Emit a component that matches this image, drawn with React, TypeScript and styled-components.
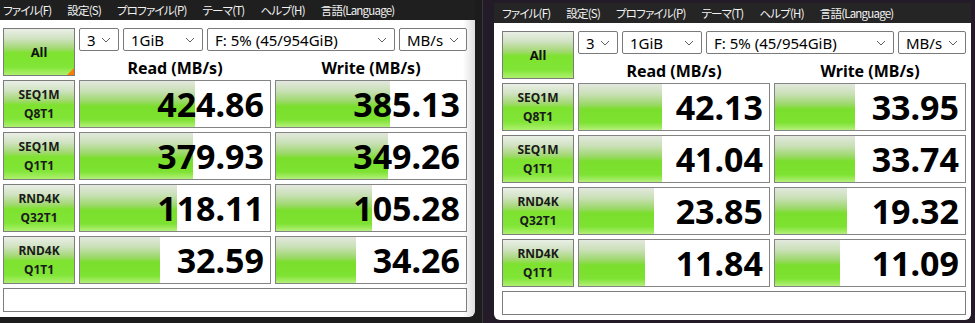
import React from "react";
import styled, { createGlobalStyle } from "styled-components";

const GlobalStyle = createGlobalStyle`
  html, body {
    margin: 0;
    padding: 0;
    background: #291d2d;
    overflow: hidden;
  }
`;

const green = `linear-gradient(
  to bottom,
  #eaefe6 0%,
  #d2e3c4 20%,
  #a3d873 42%,
  #7ee22f 52%,
  #80e536 82%,
  #aef06e 100%
)`;

const Screen = styled.div`
  display: flex;
  width: 975px;
  height: 323px;
  overflow: hidden;
`;

const LeftPane = styled.div`
  flex: none;
  width: 482px;
  height: 323px;
  background: #1c1c1c;
  border-right: 1px solid #383838;
  overflow: hidden;
`;

const RightPane = styled.div`
  flex: 1;
  height: 323px;
  box-sizing: border-box;
  padding: 3px 0 0 11px;
  background: #241b28;
  overflow: hidden;
`;

const Window = styled.div<{ $left?: boolean }>`
  width: ${(p) => (p.$left ? 480 : 477)}px;
  margin-left: ${(p) => (p.$left ? -5 : 0)}px;
  display: flex;
  flex-direction: column;
  border-radius: 0 0 6px 6px;
  overflow: hidden;
`;

const MenuBar = styled.div<{ $dim?: boolean }>`
  height: 20px;
  display: flex;
  align-items: center;
  gap: 16px;
  padding-left: 8px;
  background: ${(p) => (p.$dim ? "#252525" : "#1f1f1f")};
  color: #f2f2f2;
  font-family: "Noto Sans CJK JP", "Noto Sans", sans-serif;
  font-feature-settings: "palt";
  font-size: 11.5px;
  letter-spacing: -0.8px;
  white-space: nowrap;
`;

const Client = styled.div<{ $shade?: boolean }>`
  background: ${(p) =>
    p.$shade
      ? "linear-gradient(to right, #fff calc(100% - 12px), #dedede)"
      : "#fff"};
  padding: 8px 0 5px 8px;
`;

const Panel = styled.div`
  display: grid;
  grid-template-columns: 72px 192px 192px;
  grid-template-rows: repeat(5, 48px) 24px;
  column-gap: 4px;
  row-gap: 4px;
  font-family: "Noto Sans", "Liberation Sans", sans-serif;
`;

const AllButton = styled.div`
  position: relative;
  box-sizing: border-box;
  border: 1px solid #7b7b7b;
  background: ${green};
  display: flex;
  align-items: center;
  justify-content: center;
  font-weight: 700;
  font-size: 13px;
  color: #111;
`;

const Corner = styled.span`
  position: absolute;
  right: 0;
  bottom: 0;
  width: 0;
  height: 0;
  border-left: 7px solid transparent;
  border-bottom: 7px solid #ff7a00;
`;

const Controls = styled.div`
  grid-column: 2 / 4;
  display: flex;
  flex-direction: column;
`;

const ComboRow = styled.div`
  display: flex;
  gap: 4px;
  height: 23px;
`;

const Combo = styled.div<{ $w: number }>`
  box-sizing: border-box;
  width: ${(p) => p.$w}px;
  height: 23px;
  border: 1px solid #7a7a7a;
  border-radius: 2px;
  background: #fff;
  display: flex;
  align-items: center;
  justify-content: space-between;
  padding: 0 7px 0 7px;
  font-size: 15px;
  color: #000;
  white-space: nowrap;
`;

const Headers = styled.div`
  display: grid;
  grid-template-columns: 192px 192px;
  column-gap: 4px;
  margin-top: 9px;
  line-height: 16px;
`;

const Header = styled.div`
  text-align: center;
  font-weight: 700;
  font-size: 16px;
  color: #000;
`;

const Label = styled.div`
  box-sizing: border-box;
  border: 1px solid #7d7d7d;
  background: ${green};
  display: flex;
  flex-direction: column;
  align-items: center;
  justify-content: center;
  font-weight: 700;
  font-size: 12px;
  line-height: 19px;
  color: #1a1a1a;
`;

const Cell = styled.div`
  position: relative;
  box-sizing: border-box;
  border: 1px solid #848484;
  background: #fff;
  display: flex;
  align-items: center;
  justify-content: flex-end;
  padding-right: 6px;
`;

const Bar = styled.div`
  position: absolute;
  left: 0;
  top: 0;
  bottom: 0;
  background: linear-gradient(
    to bottom,
    #e2e8dd 0%,
    #c9e0b6 22%,
    #9cd86a 44%,
    #7ade2c 55%,
    #7ee232 84%,
    #b3f07a 100%
  );
`;

const Value = styled.span`
  position: relative;
  font-weight: 700;
  font-size: 34px;
  line-height: 34px;
  color: #000;
`;

const Comment = styled.div`
  grid-column: 1 / 4;
  box-sizing: border-box;
  border: 1px solid #7d7d7d;
  background: #fff;
`;

const Chevron = () => (
  <svg width="10" height="6" viewBox="0 0 10 6">
    <polyline points="1,1 5,5 9,1" fill="none" stroke="#606060" strokeWidth="1" />
  </svg>
);

const menu = [
  "ファイル(F)",
  "設定(S)",
  "プロファイル(P)",
  "テーマ(T)",
  "ヘルプ(H)",
  "言語(Language)",
];

const tests = [
  ["SEQ1M", "Q8T1"],
  ["SEQ1M", "Q1T1"],
  ["RND4K", "Q32T1"],
  ["RND4K", "Q1T1"],
];

// CrystalDiskMark-style log meter
const level = (v: number) => Math.min(1, Math.log10(v * 10) / 6) * 100;

interface Result {
  read: number[];
  write: number[];
}

const ValueCell = ({ v }: { v: number }) => (
  <Cell>
    <Bar style={{ width: `${level(v)}%` }} />
    <Value>{v.toFixed(2)}</Value>
  </Cell>
);

const Bench = ({ data, left }: { data: Result; left?: boolean }) => (
  <Window $left={left}>
    <MenuBar $dim={!left}>
      {menu.map((m) => (
        <span key={m}>{m}</span>
      ))}
    </MenuBar>
    <Client $shade={left}>
      <Panel>
        <AllButton>
          All
          {left && <Corner />}
        </AllButton>
        <Controls>
          <ComboRow>
            <Combo $w={40}>3<Chevron /></Combo>
            <Combo $w={80}>1GiB<Chevron /></Combo>
            <Combo $w={188}>F: 5% (45/954GiB)<Chevron /></Combo>
            <Combo $w={68}>MB/s<Chevron /></Combo>
          </ComboRow>
          <Headers>
            <Header>Read (MB/s)</Header>
            <Header>Write (MB/s)</Header>
          </Headers>
        </Controls>
        {tests.map((t, i) => (
          <React.Fragment key={i}>
            <Label>
              <span>{t[0]}</span>
              <span>{t[1]}</span>
            </Label>
            <ValueCell v={data.read[i]} />
            <ValueCell v={data.write[i]} />
          </React.Fragment>
        ))}
        <Comment />
      </Panel>
    </Client>
  </Window>
);

const fast: Result = {
  read: [424.86, 379.93, 118.11, 32.59],
  write: [385.13, 349.26, 105.28, 34.26],
};

const slow: Result = {
  read: [42.13, 41.04, 23.85, 11.84],
  write: [33.95, 33.74, 19.32, 11.09],
};

export default function App() {
  return (
    <>
      <GlobalStyle />
      <Screen>
        <LeftPane>
          <Bench data={fast} left />
        </LeftPane>
        <RightPane>
          <Bench data={slow} />
        </RightPane>
      </Screen>
    </>
  );
}
